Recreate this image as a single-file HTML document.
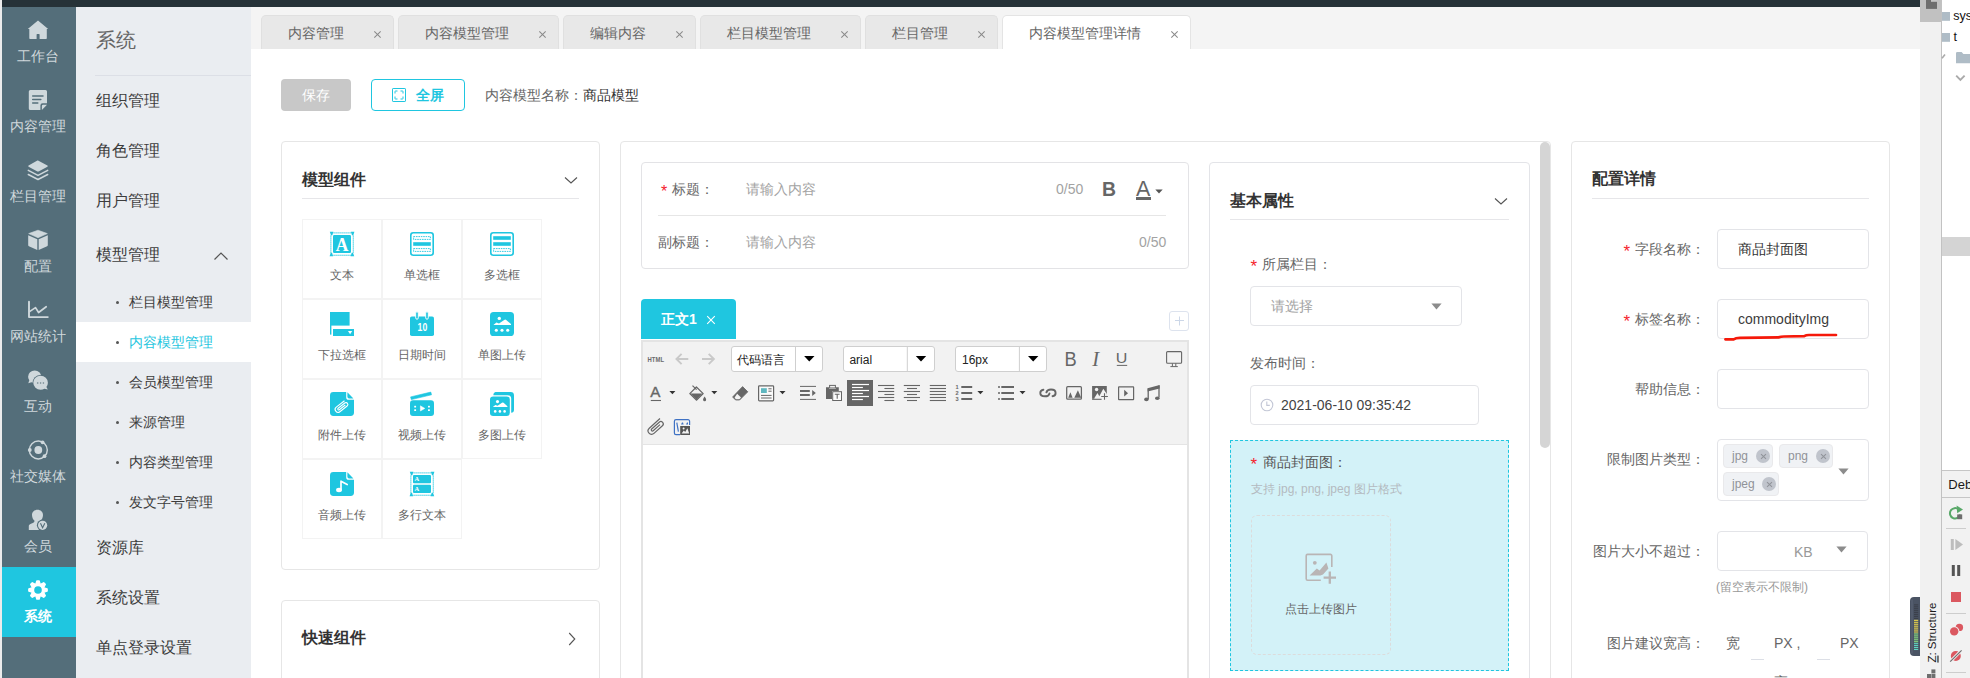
<!DOCTYPE html>
<html lang="zh">
<head>
<meta charset="utf-8">
<title>CMS</title>
<style>
*{box-sizing:border-box;margin:0;padding:0}
html,body{width:1970px;height:678px;overflow:hidden;background:#fff}
body{font-family:"Liberation Sans",sans-serif;font-size:14px;color:#666;position:relative}
.abs{position:absolute}
.t{position:absolute;white-space:nowrap;line-height:20px;height:20px}
#stage{position:absolute;left:0;top:0;width:1970px;height:678px;overflow:hidden;background:#fff}
/* frames */
#lstrip{left:0;top:0;width:2px;height:678px;background:#ececec}
#topbar{left:2px;top:0;width:1918px;height:7px;background:#263238}
#side{left:2px;top:7px;width:74px;height:671px;background:#546e7a}
#menu{left:76px;top:7px;width:175px;height:671px;background:#eaedf1}
#tabbar{left:251px;top:7px;width:1669px;height:42px;background:#f4f4f4}
/* sidebar */
.si{position:absolute;left:0;width:74px;height:70px;color:#d0d8dc;font-size:14px;text-align:center}
.si svg{position:absolute;left:26px;top:13px;width:20px;height:20px;overflow:visible}
.si span{position:absolute;left:-1px;width:74px;top:39px;line-height:20px}
.si.on{background:#1fc6e0;color:#fff;font-weight:bold}
/* menu */
.m1{position:absolute;left:20px;font-size:16px;color:#3c3c3c;line-height:24px;height:24px;white-space:nowrap}
.m2{position:absolute;left:53px;font-size:14px;color:#3c3c3c;line-height:20px;height:20px;white-space:nowrap}
.m2:before{content:"";position:absolute;left:-13px;top:9px;width:3px;height:3px;border-radius:2px;background:#555}
/* tabs */
.tab{position:absolute;top:8px;height:34px;background:#e8e8e8;border:1px solid #e0e0e0;border-bottom:none;border-radius:5px 5px 0 0;font-size:14px;color:#666}
.tab b{font-weight:normal;position:absolute;left:26px;top:7px;line-height:20px;white-space:nowrap}
.tab i{position:absolute;right:11px;top:14px;width:9px;height:9px}
.tab i:before,.tab i:after{content:"";position:absolute;left:4px;top:0;width:1px;height:9px;background:#888;transform:rotate(45deg)}
.tab i:after{transform:rotate(-45deg)}
.tab.on{background:#fff;border-color:#e4e4e4}
/* cards */
.card{position:absolute;border:1px solid #e6e6e6;border-radius:4px;background:#fff}
.h16{position:absolute;font-size:16px;font-weight:bold;color:#333;line-height:24px;height:24px;white-space:nowrap}
.hr{position:absolute;height:1px;background:#e6e6e9}
.inp{position:absolute;border:1px solid #e3e4e8;border-radius:4px;background:#fff}
.red{color:#f5222d}
.tag{position:absolute;height:24px;background:#f0f2f5;border:1px solid #e9e9eb;border-radius:4px;font-size:12px;color:#909399;line-height:22px;padding-left:8px;white-space:nowrap}
.tag i{position:absolute;right:2px;top:4px;width:14px;height:14px;border-radius:7px;background:#c0c4cc}
.tag i:before,.tag i:after{content:"";position:absolute;left:6.5px;top:3.5px;width:1px;height:7px;background:#909399;transform:rotate(45deg)}
.tag i:after{transform:rotate(-45deg)}
.cell{position:absolute;width:80px;height:80px;border:1px solid #f3f3f3;font-size:12px;color:#666}
.cell svg{position:absolute;left:27px;top:12px;width:24px;height:24px;overflow:visible}
.cell span{position:absolute;left:-1px;width:80px;top:46px;line-height:18px;text-align:center;white-space:nowrap}
</style>
</head>
<body>
<div id="stage">
<div id="lstrip" class="abs"></div>
<div id="topbar" class="abs"></div>

<!-- SIDEBAR -->
<div id="side" class="abs">
  <div class="si" style="top:0"><svg viewBox="0 0 20 20"><path d="M10 .5 L20.2 9.1 H18.8 V18.3 a.7 .7 0 0 1 -.7 .7 H11.6 V14.6 a.6 .6 0 0 0 -.6 -.6 H9.2 a.6 .6 0 0 0 -.6 .6 V19 H2 a.7 .7 0 0 1 -.7 -.7 V9.1 H-.2 Z" fill="#cfd8dc"/></svg><span>工作台</span></div>
  <div class="si" style="top:70px"><svg viewBox="0 0 20 20"><path d="M2.3 0 H17.5 a1.5 1.5 0 0 1 1.5 1.5 V13.2 H14.6 a2.2 2.2 0 0 0 -2.2 2.2 V20 H2.3 a1.5 1.5 0 0 1 -1.5 -1.5 V1.5 A1.5 1.5 0 0 1 2.3 0 Z" fill="#cfd8dc"/><path d="M13.9 20 V15.9 a1.2 1.2 0 0 1 1.2 -1.2 H19 Z" fill="#cfd8dc"/><path d="M4.7 6 H15 M4.7 9.5 H12.8 M4.7 12.9 H9.8" stroke="#546e7a" stroke-width="1.5" stroke-linecap="round" fill="none"/></svg><span>内容管理</span></div>
  <div class="si" style="top:140px"><svg viewBox="0 0 20 20"><path d="M10 .6 L19.4 5.6 Q20.3 6.2 19.4 6.8 L10.6 11.4 Q10 11.7 9.4 11.4 L.6 6.8 Q-.3 6.2 .6 5.6 L9.4 .6 Q10 .3 10.6 .6 Z" fill="#cfd8dc"/><path d="M.3 10.4 L10 15.4 L19.7 10.4 M.3 14.5 L10 19.5 L19.7 14.5" stroke="#cfd8dc" stroke-width="1.5" fill="none" stroke-linecap="round" stroke-linejoin="round"/></svg><span>栏目管理</span></div>
  <div class="si" style="top:210px"><svg viewBox="0 0 20 20"><path d="M10 .2 L19.3 3.6 L10 7.7 L.7 3.6 Z" fill="#cfd8dc" stroke="#cfd8dc" stroke-width=".6" stroke-linejoin="round"/><path d="M.2 5.2 L9.3 9.2 V20 L.9 16.2 Q.2 15.9 .2 15.2 Z" fill="#cfd8dc"/><path d="M19.8 5.2 L10.7 9.2 V20 L19.1 16.2 Q19.8 15.9 19.8 15.2 Z" fill="#cfd8dc"/></svg><span>配置</span></div>
  <div class="si" style="top:280px"><svg viewBox="0 0 20 20"><path d="M1 1.8 V17.1 H19.8" stroke="#cfd8dc" stroke-width="1.9" fill="none" stroke-linecap="round" stroke-linejoin="round"/><path d="M1.9 11.4 L7.5 7.6 L10.6 12.5 L18.2 6.7" stroke="#cfd8dc" stroke-width="1.7" fill="none" stroke-linecap="round" stroke-linejoin="round"/></svg><span>网站统计</span></div>
  <div class="si" style="top:350px"><svg viewBox="0 0 20 20"><path transform="translate(0 .7)" d="M6.7 -.2 a6.6 6.3 0 0 1 6.6 6.3 a6.6 6.3 0 0 1 -6.6 6.3 a7 7 0 0 1 -3.3 -.8 L.3 12.5 L1.3 9.6 A6.2 6.2 0 0 1 .1 6.1 A6.6 6.3 0 0 1 6.7 -.2 Z" fill="#cfd8dc"/><circle cx="12.6" cy="13" r="8.1" fill="#546e7a"/><path d="M12.6 5.8 a7.3 7 0 0 1 7.3 7 a6.8 6.8 0 0 1 -1.5 4.2 L19.8 19.6 L16.4 18.8 A7.6 7.6 0 0 1 12.6 19.8 a7.3 7 0 0 1 0 -14 Z" fill="#cfd8dc"/><circle cx="9.7" cy="13" r=".8" fill="#6b8089"/><circle cx="12.6" cy="13" r=".8" fill="#6b8089"/><circle cx="15.4" cy="13" r=".8" fill="#6b8089"/></svg><span>互动</span></div>
  <div class="si" style="top:420px"><svg viewBox="0 0 20 20"><circle cx="10.3" cy="10" r="9" fill="none" stroke="#cfd8dc" stroke-width="1.4"/><circle cx="10.3" cy="10" r="3.9" fill="#cfd8dc"/><circle cx="14.6" cy="2.3" r="1.9" fill="#cfd8dc"/><circle cx="1.8" cy="10" r="1.9" fill="#cfd8dc"/><circle cx="16.5" cy="16.2" r="1.9" fill="#cfd8dc"/></svg><span>社交媒体</span></div>
  <div class="si" style="top:490px"><svg viewBox="0 0 20 20"><path d="M9.5 -.2 C12.6 -.2 15 2 15 5 C15 7.6 13.8 9.6 12.6 10.6 C12.4 11.8 13 12.6 14.5 13.2 L16.5 14 V20 H.8 V16.2 C.8 14.8 1.6 14.2 3 13.7 L4.8 13.1 C6.2 12.5 6.6 11.8 6.4 10.6 C5.2 9.6 4 7.6 4 5 C4 2 6.4 -.2 9.5 -.2 Z" fill="#cfd8dc"/><circle cx="14.6" cy="15.3" r="5.7" fill="#546e7a"/><circle cx="14.6" cy="15.3" r="4.6" fill="#cfd8dc"/><path d="M12.5 13.2 L14.6 17.8 L16.8 13.2" stroke="#546e7a" stroke-width="1.1" fill="none"/></svg><span>会员</span></div>
  <div class="si on" style="top:560px"><svg viewBox="0 0 20 20"><path d="M8.9 .9H11.1L12.5 5.6H7.5Z" transform="rotate(0 10 10)" fill="#fff" stroke="#fff" stroke-width="1.5" stroke-linejoin="round"/><path d="M8.9 .9H11.1L12.5 5.6H7.5Z" transform="rotate(45 10 10)" fill="#fff" stroke="#fff" stroke-width="1.5" stroke-linejoin="round"/><path d="M8.9 .9H11.1L12.5 5.6H7.5Z" transform="rotate(90 10 10)" fill="#fff" stroke="#fff" stroke-width="1.5" stroke-linejoin="round"/><path d="M8.9 .9H11.1L12.5 5.6H7.5Z" transform="rotate(135 10 10)" fill="#fff" stroke="#fff" stroke-width="1.5" stroke-linejoin="round"/><path d="M8.9 .9H11.1L12.5 5.6H7.5Z" transform="rotate(180 10 10)" fill="#fff" stroke="#fff" stroke-width="1.5" stroke-linejoin="round"/><path d="M8.9 .9H11.1L12.5 5.6H7.5Z" transform="rotate(225 10 10)" fill="#fff" stroke="#fff" stroke-width="1.5" stroke-linejoin="round"/><path d="M8.9 .9H11.1L12.5 5.6H7.5Z" transform="rotate(270 10 10)" fill="#fff" stroke="#fff" stroke-width="1.5" stroke-linejoin="round"/><path d="M8.9 .9H11.1L12.5 5.6H7.5Z" transform="rotate(315 10 10)" fill="#fff" stroke="#fff" stroke-width="1.5" stroke-linejoin="round"/><circle cx="10" cy="10" r="6.7" fill="#fff"/><circle cx="10" cy="10" r="3.8" fill="#1fc6e0"/></svg><span>系统</span></div>
</div>

<!-- MENU -->
<div id="menu" class="abs">
  <div class="abs" style="left:20px;top:19px;font-size:20px;color:#666;line-height:28px;white-space:nowrap">系统</div>
  <div class="abs" style="left:19px;top:68px;width:156px;height:1px;background:#dcdfe6"></div>
  <div class="m1" style="top:82px">组织管理</div>
  <div class="m1" style="top:132px">角色管理</div>
  <div class="m1" style="top:182px">用户管理</div>
  <div class="m1" style="top:236px">模型管理</div>
  <svg class="abs" style="left:137px;top:242.5px" width="16" height="12" viewBox="0 0 16 12"><path d="M1.5 9.5 L8 3 L14.5 9.5" fill="none" stroke="#555" stroke-width="1.2"/></svg>
  <div class="m2" style="top:285px">栏目模型管理</div>
  <div class="abs" style="left:0;top:315px;width:175px;height:40px;background:#fff"></div>
  <div class="m2" style="top:325px;color:#1fc6e0">内容模型管理</div>
  <div class="m2" style="top:365px">会员模型管理</div>
  <div class="m2" style="top:405px">来源管理</div>
  <div class="m2" style="top:445px">内容类型管理</div>
  <div class="m2" style="top:485px">发文字号管理</div>
  <div class="m1" style="top:529px">资源库</div>
  <div class="m1" style="top:579px">系统设置</div>
  <div class="m1" style="top:629px">单点登录设置</div>
</div>

<!-- TABBAR -->
<div id="tabbar" class="abs">
  <div class="tab" style="left:10px;width:133px"><b>内容管理</b><i></i></div>
  <div class="tab" style="left:147px;width:161px"><b>内容模型管理</b><i></i></div>
  <div class="tab" style="left:312px;width:133px"><b>编辑内容</b><i></i></div>
  <div class="tab" style="left:449px;width:161px"><b>栏目模型管理</b><i></i></div>
  <div class="tab" style="left:614px;width:133px"><b>栏目管理</b><i></i></div>
  <div class="tab on" style="left:751px;width:189px"><b>内容模型管理详情</b><i></i></div>
</div>

<!-- TOOLBAR -->
<div class="abs" style="left:281px;top:79px;width:70px;height:32px;background:#c8c8c8;border-radius:4px;color:#fff;font-size:14px;line-height:32px;text-align:center">保存</div>
<div class="abs" style="left:371px;top:79px;width:94px;height:32px;border:1px solid #1fc6e0;border-radius:4px;color:#1fc6e0;font-size:14px;line-height:30px">
  <svg class="abs" style="left:20px;top:8px" width="14" height="14" viewBox="0 0 14 14"><rect x=".5" y=".5" width="13" height="13" rx=".6" fill="none" stroke="#1fc6e0"/><path d="M3 5.5V3.5a.5.5 0 0 1 .5-.5h2M8.5 3h2a.5.5 0 0 1 .5.5v2M11 8.5v2a.5.5 0 0 1-.5.5h-2M5.5 11h-2a.5.5 0 0 1-.5-.5v-2" fill="none" stroke="#1fc6e0"/></svg>
  <span class="abs" style="left:44px;top:0;font-weight:bold">全屏</span>
</div>
<div class="t" style="left:485px;top:85px;color:#666">内容模型名称：<span style="color:#333">商品模型</span></div>

<!-- LEFT CARD -->
<div class="card" style="left:281px;top:141px;width:319px;height:429px">
<div class="h16" style="left:20px;top:26px">模型组件</div>
<svg class="abs" style="left:282px;top:34px" width="14" height="9" viewBox="0 0 14 9"><path d="M1 1.5 L7 7 L13 1.5" fill="none" stroke="#555" stroke-width="1.1"/></svg>
<div class="hr" style="left:20px;top:56px;width:277px"></div>
<div class="cell" style="left:20px;top:77px"><svg viewBox="0 0 24 24"><rect x="3.5" y=".3" width="1.15" height="1.15" fill="#1fc6e0"/><rect x="3.5" y="22.7" width="1.15" height="1.15" fill="#1fc6e0"/><rect x=".3" y="3.5" width="1.15" height="1.15" fill="#1fc6e0"/><rect x="22.7" y="3.5" width="1.15" height="1.15" fill="#1fc6e0"/><rect x="5.5" y=".3" width="1.15" height="1.15" fill="#1fc6e0"/><rect x="5.5" y="22.7" width="1.15" height="1.15" fill="#1fc6e0"/><rect x=".3" y="5.5" width="1.15" height="1.15" fill="#1fc6e0"/><rect x="22.7" y="5.5" width="1.15" height="1.15" fill="#1fc6e0"/><rect x="7.5" y=".3" width="1.15" height="1.15" fill="#1fc6e0"/><rect x="7.5" y="22.7" width="1.15" height="1.15" fill="#1fc6e0"/><rect x=".3" y="7.5" width="1.15" height="1.15" fill="#1fc6e0"/><rect x="22.7" y="7.5" width="1.15" height="1.15" fill="#1fc6e0"/><rect x="9.5" y=".3" width="1.15" height="1.15" fill="#1fc6e0"/><rect x="9.5" y="22.7" width="1.15" height="1.15" fill="#1fc6e0"/><rect x=".3" y="9.5" width="1.15" height="1.15" fill="#1fc6e0"/><rect x="22.7" y="9.5" width="1.15" height="1.15" fill="#1fc6e0"/><rect x="11.5" y=".3" width="1.15" height="1.15" fill="#1fc6e0"/><rect x="11.5" y="22.7" width="1.15" height="1.15" fill="#1fc6e0"/><rect x=".3" y="11.5" width="1.15" height="1.15" fill="#1fc6e0"/><rect x="22.7" y="11.5" width="1.15" height="1.15" fill="#1fc6e0"/><rect x="13.5" y=".3" width="1.15" height="1.15" fill="#1fc6e0"/><rect x="13.5" y="22.7" width="1.15" height="1.15" fill="#1fc6e0"/><rect x=".3" y="13.5" width="1.15" height="1.15" fill="#1fc6e0"/><rect x="22.7" y="13.5" width="1.15" height="1.15" fill="#1fc6e0"/><rect x="15.5" y=".3" width="1.15" height="1.15" fill="#1fc6e0"/><rect x="15.5" y="22.7" width="1.15" height="1.15" fill="#1fc6e0"/><rect x=".3" y="15.5" width="1.15" height="1.15" fill="#1fc6e0"/><rect x="22.7" y="15.5" width="1.15" height="1.15" fill="#1fc6e0"/><rect x="17.5" y=".3" width="1.15" height="1.15" fill="#1fc6e0"/><rect x="17.5" y="22.7" width="1.15" height="1.15" fill="#1fc6e0"/><rect x=".3" y="17.5" width="1.15" height="1.15" fill="#1fc6e0"/><rect x="22.7" y="17.5" width="1.15" height="1.15" fill="#1fc6e0"/><rect x="19.5" y=".3" width="1.15" height="1.15" fill="#1fc6e0"/><rect x="19.5" y="22.7" width="1.15" height="1.15" fill="#1fc6e0"/><rect x=".3" y="19.5" width="1.15" height="1.15" fill="#1fc6e0"/><rect x="22.7" y="19.5" width="1.15" height="1.15" fill="#1fc6e0"/><path d="M1.5 1.5 m-1.7 -1.7 h3.6 l-1.1 3.5 h-1.3 Z" fill="#1fc6e0" transform="rotate(0 1.5 1.5)"/><path d="M22.5 1.5 m-1.7 -1.7 h3.6 l-1.1 3.5 h-1.3 Z" fill="#1fc6e0" transform="rotate(0 22.5 1.5)"/><path d="M1.5 22.5 m-1.7 -1.7 h3.6 l-1.1 3.5 h-1.3 Z" fill="#1fc6e0" transform="rotate(180 1.5 22.5)"/><path d="M22.5 22.5 m-1.7 -1.7 h3.6 l-1.1 3.5 h-1.3 Z" fill="#1fc6e0" transform="rotate(180 22.5 22.5)"/><rect x="3" y="3" width="18" height="18" rx="1.2" fill="#1fc6e0"/><text x="12" y="18.6" font-family="Liberation Serif,serif" font-size="19.5" font-weight="bold" fill="#fff" text-anchor="middle" textLength="12.6" lengthAdjust="spacingAndGlyphs">A</text></svg><span>文本</span></div>
<div class="cell" style="left:100px;top:77px"><svg viewBox="0 0 24 24"><rect x=".8" y=".8" width="22.4" height="22.4" rx="2.5" fill="none" stroke="#1fc6e0" stroke-width="1.6"/><rect x="3.6" y="4.6" width="16.8" height="2.8" fill="none" stroke="#1fc6e0" stroke-width=".9" stroke-dasharray="1.6 .8"/><rect x="3.2" y="10.2" width="17.6" height="3.6" fill="#1fc6e0"/><rect x="3.6" y="16.6" width="16.8" height="2.8" fill="none" stroke="#1fc6e0" stroke-width=".9" stroke-dasharray="1.6 .8"/></svg><span>单选框</span></div>
<div class="cell" style="left:180px;top:77px"><svg viewBox="0 0 24 24"><rect x=".8" y=".8" width="22.4" height="22.4" rx="2.5" fill="none" stroke="#1fc6e0" stroke-width="1.6"/><rect x="3.2" y="4.2" width="17.6" height="3.6" fill="#1fc6e0"/><rect x="3.2" y="10.2" width="17.6" height="3.6" fill="#1fc6e0"/><rect x="3.6" y="16.6" width="16.8" height="2.8" fill="none" stroke="#1fc6e0" stroke-width=".9" stroke-dasharray="1.6 .8"/></svg><span>多选框</span></div>
<div class="cell" style="left:20px;top:157px"><svg viewBox="0 0 24 24"><rect x="0" y="0" width="19.6" height="13.6" fill="#1fc6e0"/><rect x="0" y="13" width="1.4" height="9.6" fill="#1fc6e0"/><rect x="3" y="17" width="21" height="7" fill="#1fc6e0"/><path d="M18 19 h4.2 l-2.1 3.2 Z" fill="#fff"/></svg><span>下拉选框</span></div>
<div class="cell" style="left:100px;top:157px"><svg viewBox="0 0 24 24"><rect x="0" y="4.4" width="24" height="19.6" rx="1.8" fill="#1fc6e0"/><rect x="5.7" y="-.2" width="2.6" height="7.4" rx="1.3" fill="#1fc6e0" stroke="#fff" stroke-width=".9"/><rect x="15.7" y="-.2" width="2.6" height="7.4" rx="1.3" fill="#1fc6e0" stroke="#fff" stroke-width=".9"/><text x="12.4" y="19" font-family="Liberation Sans,sans-serif" font-size="10.5" font-weight="bold" fill="#fff" text-anchor="middle" textLength="9.6" lengthAdjust="spacingAndGlyphs">10</text></svg><span>日期时间</span></div>
<div class="cell" style="left:180px;top:157px"><svg viewBox="0 0 24 24"><rect x="0" y="0" width="24" height="24" rx="3.6" fill="#1fc6e0"/><circle cx="9.3" cy="6.4" r="1.7" fill="#fff"/><path d="M3.4 13 L6.4 10.6 L9 11.6 L14.6 7.8 Q15.4 7.4 16.2 7.9 L21 12 V13 Z" fill="#fff"/><circle cx="6.3" cy="18.3" r="1.55" fill="#fff"/><circle cx="12" cy="18.3" r="1.55" fill="#fff"/><circle cx="17.7" cy="18.3" r="1.55" fill="#fff"/></svg><span>单图上传</span></div>
<div class="cell" style="left:20px;top:237px"><svg viewBox="0 0 24 24"><path d="M3.4 0 H16.2 V5.2 a2.6 2.6 0 0 0 2.6 2.6 H24 V20.6 a3.4 3.4 0 0 1 -3.4 3.4 H3.4 a3.4 3.4 0 0 1 -3.4 -3.4 V3.4 A3.4 3.4 0 0 1 3.4 0 Z" fill="#1fc6e0"/><path d="M17.4 .3 L23.4 6.4 H19 a1.6 1.6 0 0 1 -1.6 -1.6 Z" fill="#1fc6e0"/><g transform="rotate(-38 11 15)" fill="none" stroke="#fff" stroke-width="1.1"><path d="M17.6 12.2 H7.2 a2.9 2.9 0 0 0 0 5.8 H16.4 a1.9 1.9 0 0 0 0 -3.8 H8 a.9 .9 0 0 0 0 1.9 H15.6"/></g></svg><span>附件上传</span></div>
<div class="cell" style="left:100px;top:237px"><svg viewBox="0 0 24 24"><path d="M.6 4.9 L20.8 .1 L21.5 2.8 L1.3 7.6 Z" fill="#1fc6e0" stroke="#1fc6e0" stroke-width=".6" stroke-linejoin="round"/><rect x="0" y="8.3" width="24" height="15.7" rx="3" fill="#1fc6e0"/><path d="M10.4 13.8 V19 L14.8 16.4 Z" fill="#fff" stroke="#fff" stroke-width=".5" stroke-linejoin="round"/><rect x="4.2" y="13.8" width="1.9" height="1.7" rx=".5" fill="#fff"/><rect x="4.2" y="17.2" width="1.9" height="1.7" rx=".5" fill="#fff"/><rect x="18" y="13.8" width="1.9" height="1.7" rx=".5" fill="#fff"/><rect x="18" y="17.2" width="1.9" height="1.7" rx=".5" fill="#fff"/></svg><span>视频上传</span></div>
<div class="cell" style="left:180px;top:237px"><svg viewBox="0 0 24 24"><path d="M5.4 0 H20.6 a3.4 3.4 0 0 1 3.4 3.4 V17.6 a3.2 3.2 0 0 1 -2.8 3.2 V6.6 a3.4 3.4 0 0 0 -3.4 -3.4 H3.4 A3 3 0 0 1 5.4 0 Z" fill="#1fc6e0"/><rect x="0" y="4.4" width="19.8" height="19.6" rx="3.2" fill="#1fc6e0"/><circle cx="7.5" cy="9.6" r="1.55" fill="#fff"/><path d="M2.8 15 L5.4 12.9 L7.6 13.8 L12 10.7 Q12.8 10.3 13.6 10.8 L17.4 14.2 V15 Z" fill="#fff"/><circle cx="5.2" cy="19.4" r="1.3" fill="#fff"/><circle cx="9.9" cy="19.4" r="1.3" fill="#fff"/><circle cx="14.6" cy="19.4" r="1.3" fill="#fff"/></svg><span>多图上传</span></div>
<div class="cell" style="left:20px;top:317px"><svg viewBox="0 0 24 24"><path d="M3.4 0 H16.2 V5.2 a2.6 2.6 0 0 0 2.6 2.6 H24 V20.6 a3.4 3.4 0 0 1 -3.4 3.4 H3.4 a3.4 3.4 0 0 1 -3.4 -3.4 V3.4 A3.4 3.4 0 0 1 3.4 0 Z" fill="#1fc6e0"/><path d="M17.4 .3 L23.4 6.4 H19 a1.6 1.6 0 0 1 -1.6 -1.6 Z" fill="#1fc6e0"/><ellipse cx="9" cy="18" rx="2.9" ry="2.2" fill="#fff"/><path d="M11 18 V9.2 L17.2 12.6" fill="none" stroke="#fff" stroke-width="1.7" stroke-linecap="round" stroke-linejoin="round"/></svg><span>音频上传</span></div>
<div class="cell" style="left:100px;top:317px"><svg viewBox="0 0 24 24"><rect x="3.5" y=".3" width="1.15" height="1.15" fill="#1fc6e0"/><rect x="3.5" y="22.7" width="1.15" height="1.15" fill="#1fc6e0"/><rect x=".3" y="3.5" width="1.15" height="1.15" fill="#1fc6e0"/><rect x="22.7" y="3.5" width="1.15" height="1.15" fill="#1fc6e0"/><rect x="5.5" y=".3" width="1.15" height="1.15" fill="#1fc6e0"/><rect x="5.5" y="22.7" width="1.15" height="1.15" fill="#1fc6e0"/><rect x=".3" y="5.5" width="1.15" height="1.15" fill="#1fc6e0"/><rect x="22.7" y="5.5" width="1.15" height="1.15" fill="#1fc6e0"/><rect x="7.5" y=".3" width="1.15" height="1.15" fill="#1fc6e0"/><rect x="7.5" y="22.7" width="1.15" height="1.15" fill="#1fc6e0"/><rect x=".3" y="7.5" width="1.15" height="1.15" fill="#1fc6e0"/><rect x="22.7" y="7.5" width="1.15" height="1.15" fill="#1fc6e0"/><rect x="9.5" y=".3" width="1.15" height="1.15" fill="#1fc6e0"/><rect x="9.5" y="22.7" width="1.15" height="1.15" fill="#1fc6e0"/><rect x=".3" y="9.5" width="1.15" height="1.15" fill="#1fc6e0"/><rect x="22.7" y="9.5" width="1.15" height="1.15" fill="#1fc6e0"/><rect x="11.5" y=".3" width="1.15" height="1.15" fill="#1fc6e0"/><rect x="11.5" y="22.7" width="1.15" height="1.15" fill="#1fc6e0"/><rect x=".3" y="11.5" width="1.15" height="1.15" fill="#1fc6e0"/><rect x="22.7" y="11.5" width="1.15" height="1.15" fill="#1fc6e0"/><rect x="13.5" y=".3" width="1.15" height="1.15" fill="#1fc6e0"/><rect x="13.5" y="22.7" width="1.15" height="1.15" fill="#1fc6e0"/><rect x=".3" y="13.5" width="1.15" height="1.15" fill="#1fc6e0"/><rect x="22.7" y="13.5" width="1.15" height="1.15" fill="#1fc6e0"/><rect x="15.5" y=".3" width="1.15" height="1.15" fill="#1fc6e0"/><rect x="15.5" y="22.7" width="1.15" height="1.15" fill="#1fc6e0"/><rect x=".3" y="15.5" width="1.15" height="1.15" fill="#1fc6e0"/><rect x="22.7" y="15.5" width="1.15" height="1.15" fill="#1fc6e0"/><rect x="17.5" y=".3" width="1.15" height="1.15" fill="#1fc6e0"/><rect x="17.5" y="22.7" width="1.15" height="1.15" fill="#1fc6e0"/><rect x=".3" y="17.5" width="1.15" height="1.15" fill="#1fc6e0"/><rect x="22.7" y="17.5" width="1.15" height="1.15" fill="#1fc6e0"/><rect x="19.5" y=".3" width="1.15" height="1.15" fill="#1fc6e0"/><rect x="19.5" y="22.7" width="1.15" height="1.15" fill="#1fc6e0"/><rect x=".3" y="19.5" width="1.15" height="1.15" fill="#1fc6e0"/><rect x="22.7" y="19.5" width="1.15" height="1.15" fill="#1fc6e0"/><path d="M1.5 1.5 m-1.7 -1.7 h3.6 l-1.1 3.5 h-1.3 Z" fill="#1fc6e0" transform="rotate(0 1.5 1.5)"/><path d="M22.5 1.5 m-1.7 -1.7 h3.6 l-1.1 3.5 h-1.3 Z" fill="#1fc6e0" transform="rotate(0 22.5 1.5)"/><path d="M1.5 22.5 m-1.7 -1.7 h3.6 l-1.1 3.5 h-1.3 Z" fill="#1fc6e0" transform="rotate(180 1.5 22.5)"/><path d="M22.5 22.5 m-1.7 -1.7 h3.6 l-1.1 3.5 h-1.3 Z" fill="#1fc6e0" transform="rotate(180 22.5 22.5)"/><rect x="3" y="3" width="18" height="8.2" rx="1" fill="#1fc6e0"/><rect x="3" y="12.8" width="18" height="8.2" rx="1" fill="#1fc6e0"/><text x="6.8" y="9.3" font-family="Liberation Serif,serif" font-size="6.5" font-weight="bold" fill="#fff" text-anchor="middle">A</text><text x="6.8" y="19.1" font-family="Liberation Serif,serif" font-size="6.5" font-weight="bold" fill="#fff" text-anchor="middle">A</text></svg><span>多行文本</span></div>
</div>
<div class="card" style="left:281px;top:600px;width:319px;height:120px">
<div class="h16" style="left:20px;top:25px">快速组件</div>
<svg class="abs" style="left:286px;top:31px" width="8" height="14" viewBox="0 0 8 14"><path d="M1.2 1 L6.8 7 L1.2 13" fill="none" stroke="#555" stroke-width="1.1"/></svg>
</div>
<!-- CENTER CARD -->
<div class="card" style="left:620px;top:141px;width:931px;height:600px"></div>
<div class="inp" style="left:641px;top:162px;width:548px;height:107px;border-color:#e3e3e6"></div>
<div class="t" style="left:661px;top:180px"><span class="red" style="position:relative;top:2px;font-size:16px">*</span></div>
<div class="t" style="left:672px;top:179px">标题：</div>
<div class="t" style="left:746px;top:179px;color:#a3a3a3">请输入内容</div>
<div class="t" style="left:1056px;top:179px;color:#a3a3a3">0/50</div>
<div class="t" style="left:1101.5px;top:179px;font-size:20px;font-weight:bold;color:#666;transform:scaleX(.97);transform-origin:0 0">B</div>
<div class="t" style="left:1136px;top:179px;font-size:21.5px;color:#666">A</div>
<div class="abs" style="left:1136px;top:197px;width:15px;height:3px;background:#666"></div>
<svg class="abs" style="left:1155px;top:189px" width="8" height="5" viewBox="0 0 8 5"><path d="M.3 .5H7.7L4 4.5Z" fill="#555"/></svg>
<div class="hr" style="left:658px;top:215px;width:508px;background:#e6e6e6"></div>
<div class="t" style="left:658px;top:232px">副标题：</div>
<div class="t" style="left:746px;top:232px;color:#a3a3a3">请输入内容</div>
<div class="t" style="left:1139px;top:232px;color:#a3a3a3">0/50</div>
<div class="abs" style="left:641px;top:299px;width:95px;height:40px;background:#1fc6e0;border-radius:4px 4px 0 0"></div>
<div class="t" style="left:661px;top:309px;color:#fff;font-weight:bold">正文1</div>
<svg class="abs" style="left:706px;top:315px" width="10" height="10" viewBox="0 0 10 10"><path d="M1.2 1.2L8.8 8.8M8.8 1.2L1.2 8.8" stroke="#fff" stroke-width="1.1"/></svg>
<div class="abs" style="left:1169px;top:311px;width:20px;height:20px;border:1px solid #dde3ee;border-radius:3px"></div>
<svg class="abs" style="left:1174px;top:316px" width="10" height="10" viewBox="0 0 10 10"><path d="M5.5 .5V9.5M1 4.5H10" stroke="#ccd7e8" stroke-width="1"/></svg>
<div class="abs" style="left:641px;top:340px;width:548px;height:360px;background:#fff;border:2px solid #e4e4e4;border-top-width:2px;border-right-width:2px"></div>
<div class="abs" style="left:643px;top:342px;width:544px;height:103px;background:#f2f2f2;border-bottom:1px solid #e4e4e4"></div>
<svg class="abs" style="left:0;top:0;font-family:'Liberation Sans',sans-serif" width="1970" height="678" viewBox="0 0 1970 678"><text x="647.6" y="362.2" font-size="7.2" font-weight="bold" fill="#6a6a6a" textLength="16.4" lengthAdjust="spacingAndGlyphs">HTML</text><path d="M688.3 359H676.6M681.6 353.8L676.4 359L681.6 364.2" fill="none" stroke="#c9c9c9" stroke-width="1.9"/><path d="M702 359H713.7M708.7 353.8L713.9 359L708.7 364.2" fill="none" stroke="#c9c9c9" stroke-width="1.9"/><rect x="731.5" y="346.5" width="91" height="25" rx="2.5" fill="#fff" stroke="#cfcfcf"/><path d="M795.5 347V371" stroke="#cfcfcf"/><path d="M804.0999999999999 356.0h10.4l-5.2 5.4Z" fill="#000"/><rect x="843.5" y="346.5" width="91" height="25" rx="2.5" fill="#fff" stroke="#cfcfcf"/><path d="M907.3 347V371" stroke="#cfcfcf"/><path d="M915.8 356.0h10.4l-5.2 5.4Z" fill="#000"/><rect x="955.5" y="346.5" width="91" height="25" rx="2.5" fill="#fff" stroke="#cfcfcf"/><path d="M1019.4 347V371" stroke="#cfcfcf"/><path d="M1028.0 356.0h10.4l-5.2 5.4Z" fill="#000"/><text x="737.4" y="364" font-size="12" fill="#222">代码语言</text><text x="849.4" y="363.6" font-size="12" fill="#222">arial</text><text x="962" y="363.6" font-size="12" fill="#222">16px</text><text x="1064.4" y="365.9" font-size="20" fill="#666" textLength="12.2" lengthAdjust="spacingAndGlyphs">B</text><text x="1092.2" y="365.8" font-size="20.5" font-style="italic" font-family="Liberation Serif,serif" fill="#666">I</text><text x="1115.8" y="362.8" font-size="15.4" fill="#666" textLength="11.6" lengthAdjust="spacingAndGlyphs">U</text><path d="M1116.8 365.4H1127.2" stroke="#666" stroke-width="1"/><rect x="1166.6" y="351.6" width="15" height="11.6" rx="1" fill="none" stroke="#666" stroke-width="1.1"/><path d="M1172.4 363.4V366.3M1175.8 363.4V366.3M1170.4 366.6H1177.8" stroke="#666" stroke-width="1" fill="none"/><text x="650.2" y="396.7" font-size="15.2" fill="#666" stroke="#666" stroke-width=".35">A</text><path d="M650.8 400.5H661" stroke="#666" stroke-width="1.1"/><path d="M669.4 391.09999999999997h6l-3.0 3.2Z" fill="#333"/><path d="M692.5 385.6L696.6 389.7" stroke="#666" stroke-width="1.2"/><path d="M696.4 387L703.2 393.6L696.4 400.2L689.8 393.6Z" fill="none" stroke="#666" stroke-width="1.2" stroke-linejoin="round"/><path d="M690.3 393.6H702.7L696.4 399.8Z" fill="#666"/><path d="M704.6 396.6C705.6 398 706.1 398.9 706.1 399.8A1.5 1.5 0 0 1 703.1 399.8C703.1 398.9 703.6 398 704.6 396.6Z" fill="#666"/><path d="M711.3 391.09999999999997h6l-3.0 3.2Z" fill="#333"/><path d="M742.6 386.6L747.8 391.8L739.6 400H735.6L732.6 397Z" fill="#666" stroke="#666" stroke-width=".8" stroke-linejoin="round"/><path d="M737.2 393.8L741 397.6L739.4 399.2H735.8L734.6 397.4Z" fill="#f2f2f2"/><rect x="758.6" y="385.8" width="15" height="15" rx=".8" fill="#fafafa" stroke="#666" stroke-width="1.2"/><rect x="761" y="388.2" width="5.8" height="4.8" fill="#5fb7c0"/><path d="M768.4 388.8H771.6M768.4 391.2H771.6M761 395.4H771.6M761 398H771.6" stroke="#666" stroke-width="1"/><path d="M779.5 391.09999999999997h6l-3.0 3.2Z" fill="#333"/><path d="M800 386.4H816M800 399.4H816" stroke="#666" stroke-width="1"/><path d="M800 391H809.8M800 395H809.8" stroke="#666" stroke-width="1.9"/><path d="M812.2 390V396L815.8 393Z" fill="#666"/><path d="M826 387.2H829.2V389H835.8V387.2H838.8V391H832V399H826Z" fill="#666"/><rect x="829.6" y="385.4" width="5.8" height="2.6" fill="none" stroke="#666" stroke-width="1"/><rect x="832.7" y="391.7" width="8.8" height="8.8" fill="#fafafa" stroke="#666" stroke-width="1"/><path d="M834.8 394.2H839.6M837.2 394.2V398.8" stroke="#666" stroke-width="1.1"/><rect x="847" y="380" width="26" height="26" fill="#666"/><path d="M852 384.5H869" stroke="#fff" stroke-width="1.2"/><path d="M852 387.5H862.9" stroke="#fff" stroke-width="1.2"/><path d="M852 390.5H869" stroke="#fff" stroke-width="1.2"/><path d="M852 393.5H862.9" stroke="#fff" stroke-width="1.2"/><path d="M852 396.5H869" stroke="#fff" stroke-width="1.2"/><path d="M852 399.5H862.9" stroke="#fff" stroke-width="1.2"/><path d="M878 385.5H894.2" stroke="#666" stroke-width="1.1"/><path d="M884.4 388.5H894.2" stroke="#666" stroke-width="1.1"/><path d="M878 391.5H894.2" stroke="#666" stroke-width="1.1"/><path d="M884.4 394.5H894.2" stroke="#666" stroke-width="1.1"/><path d="M878 397.5H894.2" stroke="#666" stroke-width="1.1"/><path d="M884.4 400.5H894.2" stroke="#666" stroke-width="1.1"/><path d="M903.8 385.5H920" stroke="#666" stroke-width="1.1"/><path d="M907 388.5H917" stroke="#666" stroke-width="1.1"/><path d="M903.8 391.5H920" stroke="#666" stroke-width="1.1"/><path d="M907 394.5H917" stroke="#666" stroke-width="1.1"/><path d="M903.8 397.5H920" stroke="#666" stroke-width="1.1"/><path d="M907 400.5H917" stroke="#666" stroke-width="1.1"/><path d="M929.8 385.5H946" stroke="#666" stroke-width="1.1"/><path d="M929.8 388.5H946" stroke="#666" stroke-width="1.1"/><path d="M929.8 391.5H946" stroke="#666" stroke-width="1.1"/><path d="M929.8 394.5H946" stroke="#666" stroke-width="1.1"/><path d="M929.8 397.5H946" stroke="#666" stroke-width="1.1"/><path d="M929.8 400.5H946" stroke="#666" stroke-width="1.1"/><path d="M961.3 387H972.2M961.3 393H972.2M961.3 399H972.2" stroke="#666" stroke-width="1.9"/><text x="955.6" y="389" font-size="5.6" font-weight="bold" fill="#666">1</text><text x="955.6" y="395.2" font-size="5.6" font-weight="bold" fill="#666">2</text><text x="955.6" y="401.2" font-size="5.6" font-weight="bold" fill="#666">3</text><path d="M977.4 391.09999999999997h6l-3.0 3.2Z" fill="#333"/><path d="M1001.3 387H1014M1001.3 393H1014M1001.3 399H1014" stroke="#666" stroke-width="1.9"/><path d="M998 387H1000M998 393H1000M998 399H1000" stroke="#666" stroke-width="1.6"/><path d="M1019.5 391.09999999999997h6l-3.0 3.2Z" fill="#333"/><g fill="none" stroke="#666" stroke-width="1.9" stroke-linecap="round"><path d="M1043.4 389.7C1041.2 390.1 1040.3 391.4 1040.3 392.9C1040.3 395 1042 396.3 1045 396.3C1047.4 396.3 1049 395.4 1049.5 393.4"/><path d="M1046.4 392.4C1046.9 390.4 1048.6 389.5 1051 389.5C1053.8 389.5 1055.6 390.8 1055.6 392.9C1055.6 394.6 1054.6 395.9 1052.5 396.2"/></g><rect x="1066.7" y="386.7" width="14.7" height="12.5" rx="1" fill="none" stroke="#666" stroke-width="1.25"/><path d="M1068.2 397.7L1070.4 392.2L1072.6 397.7ZM1074.3 397.7L1077.9 390.2L1081.2 397.7Z" fill="#666"/><rect x="1092.1" y="386" width="14.7" height="12.8" fill="#666"/><circle cx="1096.6" cy="389.5" r="1.7" fill="#f2f2f2"/><path d="M1094.4 397.9L1097.5 393.1L1099.3 396.2L1103.3 388.8L1106.9 394V399H1094.4Z" fill="#f2f2f2"/><path d="M1092.1 399.3H1101.6" stroke="#666" stroke-width="1.1"/><path d="M1101.2 396.5H1107.9M1104.5 393.2V399.8" stroke="#666" stroke-width="1.1"/><rect x="1118.6" y="386.8" width="15" height="12.8" rx=".4" fill="none" stroke="#666" stroke-width="1.2"/><path d="M1124.2 389.8V396.6L1128 393.2Z" fill="#666"/><path d="M1147.6 388.2L1159.6 385V388.4L1147.6 391.4Z" fill="#666"/><path d="M1148.2 388.4V399M1159 385.4V397.6" stroke="#666" stroke-width="1.3"/><ellipse cx="1146.4" cy="399.4" rx="2.3" ry="1.8" fill="#666"/><ellipse cx="1157.3" cy="398.2" rx="2.3" ry="1.8" fill="#666"/><g transform="rotate(-42 656 427)" fill="none" stroke="#666" stroke-width="1.2"><path d="M664.6 423.4H650.2a3.5 3.5 0 0 0 0 7H661.6a2.4 2.4 0 0 0 0 -4.8H651.4a1.15 1.15 0 0 0 0 2.3H660.6"/></g><path d="M680 434.6H676a1.6 1.6 0 0 1 -1.6 -1.6V421.2a1.6 1.6 0 0 1 1.6 -1.6H688a1.6 1.6 0 0 1 1.6 1.6V425" fill="none" stroke="#3f72c4" stroke-width="1.2"/><path d="M676.8 422.6L678.4 431.6" stroke="#3f72c4" stroke-width="1.2"/><path d="M681 424.4L682 422.4H683L683.6 424.4ZM686 424.4L687 422.4H688L688 424.4Z" fill="#3f72c4"/><rect x="680.2" y="426" width="9.8" height="9" fill="#555"/><circle cx="683.6" cy="428.6" r="1" fill="#f2f2f2"/><path d="M681.6 433.6L683.8 430.4L685.2 432L687.4 428.2L689.2 433.6Z" fill="#f2f2f2"/></svg>
<!-- CENTER SCROLLBAR -->
<div class="abs" style="left:1540px;top:142px;width:10px;height:306px;background:#d5d5d5;border-radius:5px"></div>
<!-- BASIC ATTR -->
<div class="inp" style="left:1209px;top:162px;width:321px;height:560px"></div>
<div class="h16" style="left:1230px;top:189px">基本属性</div>
<svg class="abs" style="left:1494px;top:197px" width="14" height="9" viewBox="0 0 14 9"><path d="M1 1.5L7 7L13 1.5" fill="none" stroke="#555" stroke-width="1.1"/></svg>
<div class="hr" style="left:1230px;top:219px;width:279px"></div>
<div class="t red" style="left:1250.5px;top:257px;font-size:17px">*</div>
<div class="t" style="left:1262px;top:254px">所属栏目：</div>
<div class="inp" style="left:1250px;top:286px;width:212px;height:40px"></div>
<div class="t" style="left:1271px;top:296px;color:#a3a3a3">请选择</div>
<svg class="abs" style="left:1431px;top:303px" width="11" height="7" viewBox="0 0 11 7"><path d="M.4 .5H10.6L5.5 6.4Z" fill="#8c8c8c"/></svg>
<div class="t" style="left:1250px;top:353px">发布时间：</div>
<div class="inp" style="left:1250px;top:385px;width:229px;height:40px"></div>
<svg class="abs" style="left:1260px;top:398px" width="14" height="14" viewBox="0 0 14 14"><circle cx="7" cy="7" r="5.8" fill="none" stroke="#c3c7d6" stroke-width="1.1"/><path d="M6.8 3.6V7.4H9.8" fill="none" stroke="#c3c7d6" stroke-width="1.1"/></svg>
<div class="t" style="left:1281px;top:395px;color:#444">2021-06-10 09:35:42</div>
<div class="abs" style="left:1230px;top:440px;width:279px;height:231px;background:#d3f2f8;border:1px dashed #1fc6e0"></div>
<div class="t red" style="left:1250.5px;top:455px;font-size:17px">*</div>
<div class="t" style="left:1263px;top:452px;color:#555">商品封面图：</div>
<div class="t" style="left:1251px;top:479px;font-size:12px;color:#b4bac0">支持 jpg, png, jpeg 图片格式</div>
<div class="abs" style="left:1251px;top:515px;width:140px;height:140px;border:1px dashed #dcdcdc;border-radius:6px"></div>
<svg class="abs" style="left:1304px;top:552px" width="34" height="34" viewBox="0 0 34 34"><path d="M16.8 28.2H3.6a1.4 1.4 0 0 1-1.4-1.4V3.8a1.4 1.4 0 0 1 1.4-1.4H26.4a1.4 1.4 0 0 1 1.4 1.4V15" fill="none" stroke="#b9b5b5" stroke-width="1.6"/><circle cx="10.8" cy="10.8" r="1.9" fill="#b9b5b5"/><path d="M5.6 23.4L12.8 16.4L15.6 18.6L22.4 10.6L24.4 16.6L19 22.6L16.4 23.4Z" fill="#b9b5b5"/><path d="M25.8 19.4V31.8M19.6 25.6H32" stroke="#b9b5b5" stroke-width="2.3" fill="none"/></svg>
<div class="t" style="left:1285px;top:599px;font-size:12px;color:#666">点击上传图片</div>
<!-- CONFIG -->
<div class="card" style="left:1571px;top:141px;width:319px;height:600px"></div>
<div class="h16" style="left:1592px;top:167px">配置详情</div>
<div class="hr" style="left:1592px;top:198px;width:277px"></div>
<div class="t red" style="left:1623.5px;top:242px;font-size:17px">*</div>
<div class="t" style="left:1635px;top:239px">字段名称：</div>
<div class="inp" style="left:1717px;top:229px;width:152px;height:40px"></div>
<div class="t" style="left:1738px;top:239px;color:#333">商品封面图</div>
<div class="t red" style="left:1623.5px;top:312px;font-size:17px">*</div>
<div class="t" style="left:1635px;top:309px">标签名称：</div>
<div class="inp" style="left:1717px;top:299px;width:152px;height:40px"></div>
<div class="t" style="left:1738px;top:309px;color:#3c3c3c">commodityImg</div>
<svg class="abs" style="left:1720px;top:330px" width="122" height="14" viewBox="0 0 122 14"><path d="M5.4 9.3H13.6C15.4 8.2 17 8 20 7.9L58.4 7.4C60.6 6.6 62 6.5 64 6.5L84.2 6.2C85.8 5.2 87.4 5 89 5H116" fill="none" stroke="#f5190a" stroke-width="2.7" stroke-linecap="round" stroke-linejoin="round"/></svg>
<div class="t" style="left:1635px;top:379px">帮助信息：</div>
<div class="inp" style="left:1717px;top:369px;width:152px;height:40px"></div>
<div class="t" style="left:1607px;top:449px">限制图片类型：</div>
<div class="inp" style="left:1717px;top:439px;width:152px;height:62px"></div>
<div class="tag" style="left:1723px;top:444px;width:50px">jpg<i></i></div>
<div class="tag" style="left:1779px;top:444px;width:54px">png<i></i></div>
<div class="tag" style="left:1723px;top:472px;width:56px">jpeg<i></i></div>
<svg class="abs" style="left:1838px;top:468px" width="11" height="7" viewBox="0 0 11 7"><path d="M.4 .5H10.6L5.5 6.4Z" fill="#8c8c8c"/></svg>
<div class="t" style="left:1593px;top:541px">图片大小不超过：</div>
<div class="inp" style="left:1717px;top:531px;width:151px;height:40px"></div>
<div class="t" style="left:1794px;top:542px;color:#999">KB</div>
<svg class="abs" style="left:1836px;top:546px" width="11" height="7" viewBox="0 0 11 7"><path d="M.4 .5H10.6L5.5 6.4Z" fill="#8c8c8c"/></svg>
<div class="t" style="left:1716px;top:577px;font-size:12px;color:#999">(留空表示不限制)</div>
<div class="t" style="left:1607px;top:633px">图片建议宽高：</div>
<div class="t" style="left:1726px;top:633px">宽</div>
<div class="t" style="left:1774px;top:633px">PX ,</div>
<div class="t" style="left:1840px;top:633px">PX</div>
<div class="abs" style="left:1751px;top:659px;width:13px;height:1px;background:#dcdfe6"></div>
<div class="abs" style="left:1817px;top:659px;width:13px;height:1px;background:#dcdfe6"></div>
<div class="t" style="left:1774px;top:672px">高</div>
<!--CARDS-->
<!-- RIGHT STRIP -->
<div class="abs" style="left:1920px;top:0;width:22px;height:678px;background:#f1f1f1"></div>
<div class="abs" style="left:1920px;top:0;width:22px;height:22px;background:#c1c1c1"></div>
<div class="abs" style="left:1942px;top:0;width:28px;height:678px;background:#fff"></div>
<div class="abs" style="left:1942px;top:237px;width:28px;height:19px;background:#d4d4d4"></div>
<div class="abs" style="left:1942px;top:471px;width:28px;height:207px;background:#f2f2f2"></div>
<div class="abs" style="left:1941px;top:0;width:1px;height:678px;background:#c2c2c2"></div>
<svg class="abs" style="left:0;top:0;font-family:'Liberation Sans',sans-serif" width="1970" height="678" viewBox="0 0 1970 678">
<rect x="1926" y="0" width="11" height="8.9" fill="#6e6e6e"/><rect x="1931" y="0" width="6" height="1.8" fill="#c6c6c6"/>
<rect x="1942" y="12" width="8" height="8.8" fill="#afbcc6"/><text x="1953.2" y="20.1" font-size="12.5" fill="#111">sys</text>
<rect x="1942" y="33" width="8" height="8.8" fill="#afbcc6"/><text x="1953.4" y="41.2" font-size="12.5" fill="#111">t</text>
<path d="M1942 58.2L1945 54.6" stroke="#aaa" stroke-width="1.6" fill="none"/>
<path d="M1956 53.2a1.2 1.2 0 0 1 1.2-1.2H1961.6L1963.4 54H1970V63.2H1956Z" fill="#afbcc6"/>
<path d="M1956.2 75.6L1960.4 79.8L1964.6 75.6" stroke="#aaa" stroke-width="1.9" fill="none"/>
<path d="M1942 470.5H1970M1942 497.5H1970" stroke="#c6c6c6"/>
<text x="1948.3" y="489" font-size="13" fill="#1a1a1a">Deb</text>
<path d="M1958.6 509.4A5.2 5.2 0 1 0 1960.2 514.6" fill="none" stroke="#59a869" stroke-width="2"/><path d="M1956.6 505.4L1963 509.6L1957.2 513.2Z" fill="#59a869"/><rect x="1957.2" y="514.4" width="5" height="4.8" fill="#6e6e6e"/>
<path d="M1946 528.5H1966M1946 613.5H1966M1946 672.5H1966" stroke="#cdcdcd"/>
<rect x="1950.8" y="539" width="3" height="11" fill="#bdbdbd"/><path d="M1955.4 539V550L1963 544.5Z" fill="#bdbdbd"/>
<rect x="1951.8" y="565" width="3" height="11" fill="#555"/><rect x="1957.2" y="565" width="3" height="11" fill="#555"/>
<rect x="1951" y="592" width="10" height="10" fill="#db5860"/>
<circle cx="1959.4" cy="627.4" r="3.7" fill="#db5860"/><circle cx="1954.2" cy="631.4" r="5.2" fill="#f2f2f2"/><circle cx="1954.2" cy="631.4" r="4.2" fill="#db5860"/>
<circle cx="1955.8" cy="656" r="5" fill="#db5860"/><path d="M1949.6 662.2L1962 649.8" stroke="#f2f2f2" stroke-width="3"/><path d="M1950.2 661.6L1961.6 650.4" stroke="#6e6e6e" stroke-width="1.2"/>
<path d="M1914 597H1920V656H1914a4 4 0 0 1-4-4V601a4 4 0 0 1 4-4Z" fill="#4a5363"/><path d="M1912 599.5V653.5" stroke="#5c6679" stroke-width="1"/><rect x="1914" y="604.30" width="4.2" height="1.1" fill="#3b404b"/><rect x="1914" y="606.24" width="4.2" height="1.1" fill="#3b404b"/><rect x="1914" y="608.18" width="4.2" height="1.1" fill="#3b404b"/><rect x="1914" y="610.12" width="4.2" height="1.1" fill="#3b404b"/><rect x="1914" y="612.06" width="4.2" height="1.1" fill="#3b404b"/><rect x="1914" y="614.00" width="4.2" height="1.1" fill="#3b404b"/><rect x="1914" y="615.94" width="4.2" height="1.1" fill="#3b404b"/><rect x="1914" y="617.88" width="4.2" height="1.1" fill="#3b404b"/><rect x="1914" y="619.82" width="4.2" height="1.1" fill="#e6d24c"/><rect x="1914" y="621.76" width="4.2" height="1.1" fill="#e6d24c"/><rect x="1914" y="623.70" width="4.2" height="1.1" fill="#e6d24c"/><rect x="1914" y="625.64" width="4.2" height="1.1" fill="#e6d24c"/><rect x="1914" y="627.58" width="4.2" height="1.1" fill="#e6d24c"/><rect x="1914" y="629.52" width="4.2" height="1.1" fill="#e6d24c"/><rect x="1914" y="631.46" width="4.2" height="1.1" fill="#e6d24c"/><rect x="1914" y="633.40" width="4.2" height="1.1" fill="#86dc80"/><rect x="1914" y="635.34" width="4.2" height="1.1" fill="#86dc80"/><rect x="1914" y="637.28" width="4.2" height="1.1" fill="#86dc80"/><rect x="1914" y="639.22" width="4.2" height="1.1" fill="#86dc80"/><rect x="1914" y="641.16" width="4.2" height="1.1" fill="#86dc80"/><rect x="1914" y="643.10" width="4.2" height="1.1" fill="#5fd6c2"/><rect x="1914" y="645.04" width="4.2" height="1.1" fill="#5fd6c2"/><rect x="1914" y="646.98" width="4.2" height="1.1" fill="#5fd6c2"/><rect x="1914" y="648.92" width="4.2" height="1.1" fill="#5fd6c2"/>
<text transform="translate(1936.4 662.6) rotate(-90)" font-size="11.4" fill="#1a1a1a" textLength="60" lengthAdjust="spacingAndGlyphs"><tspan text-decoration="underline">Z</tspan>: Structure</text>
<rect x="1931.4" y="669.4" width="4" height="4" fill="#6e6e6e"/><rect x="1927" y="674" width="4" height="4" fill="#6e6e6e"/><rect x="1931.4" y="674" width="4" height="4" fill="#6e6e6e"/>
</svg>
<!--RIGHTSTRIP-->
</div>
</body>
</html>
